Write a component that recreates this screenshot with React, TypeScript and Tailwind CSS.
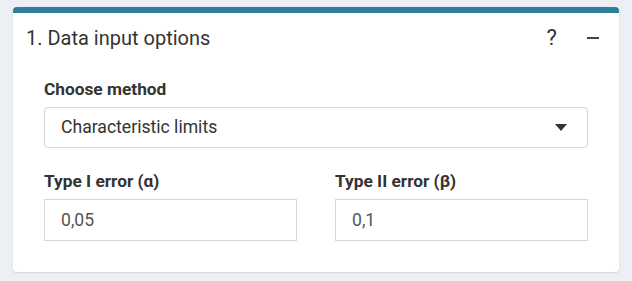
import React from 'react';

const Field = ({ label, value }: { label: string; value: string }) => (
  <div className="flex flex-col">
    <label className="text-[17.3px] leading-[24px] font-bold text-[#333]">{label}</label>
    <div className="mt-[6px] h-[42px] border border-[#d2d6de] bg-white flex items-center pl-[16px] text-[17.6px] text-[#555]">
      {value}
    </div>
  </div>
);

const App = () => {
  return (
    <div className="w-[632px] h-[281px] bg-[#ecf0f5] pt-[7px] px-[13px] font-['Roboto',sans-serif]">
      <div className="h-[265px] bg-white rounded-[4px] border-t-[6px] border-[#2e7d9a] shadow-[0_1px_2px_rgba(0,0,0,0.12)]">
        {/* header */}
        <div className="h-[46px] pt-[4px] flex items-center justify-between pl-[13px] pr-[20px]">
          <h3 className="text-[20px] text-[#333] leading-none">1. Data input options</h3>
          <div className="flex items-center gap-[30px]">
            <span className="text-[22px] text-[#333] leading-none">?</span>
            <span className="block w-[12px] h-[2px] bg-[#444]" />
          </div>
        </div>

        {/* body */}
        <div className="px-[31px] pt-[18px]">
          <label className="block text-[17.3px] leading-[24px] font-bold text-[#333]">Choose method</label>
          <div className="mt-[6px] h-[41px] border border-[#ced4da] rounded-[4px] flex items-center justify-between pl-[16px] pr-[20px] text-[17.6px] text-[#333]">
            <span>Characteristic limits</span>
            <svg width="12" height="7" viewBox="0 0 12 7">
              <path d="M0 0 H12 L6 7 Z" fill="#333" />
            </svg>
          </div>

          <div className="mt-[21px] grid grid-cols-2 gap-[38px]">
            <Field label="Type I error (α)" value="0,05" />
            <Field label="Type II error (β)" value="0,1" />
          </div>
        </div>
      </div>
    </div>
  );
};

export default App;
